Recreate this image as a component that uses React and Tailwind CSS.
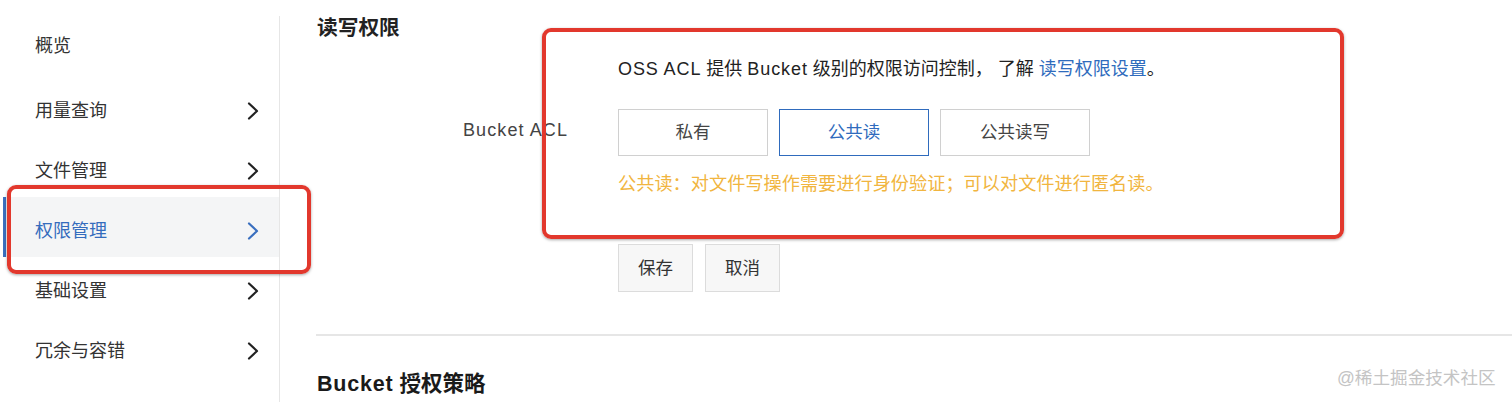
import React from "react";

const font = { fontFamily: '"Liberation Sans", "Noto Sans CJK SC", sans-serif' };

function Chevron({ color = "#222" }) {
  return (
    <svg width="12" height="18" viewBox="0 0 12 18" fill="none">
      <polyline points="2,1.5 10,9 2,16.5" stroke={color} strokeWidth="2.2" strokeLinecap="round" strokeLinejoin="round" />
    </svg>
  );
}

const items = [
  { label: "概览", chevron: false },
  { label: "用量查询", chevron: true },
  { label: "文件管理", chevron: true },
  { label: "权限管理", chevron: true, active: true },
  { label: "基础设置", chevron: true },
  { label: "冗余与容错", chevron: true },
];

export default function App() {
  return (
    <div
      className="relative w-[1512px] h-[402px] overflow-hidden bg-white flex text-[#333]"
      style={font}
    >
      {/* Sidebar */}
      <div className="w-[280px] shrink-0 mt-4 border-r border-[#e6e6e6] flex flex-col">
        {items.map((it, i) => (
          <div
            key={i}
            className={
              i === 0
                ? "h-[61px] flex items-center pl-[35px] text-[18px]"
                : it.active
                ? "h-[60px] flex items-center ml-[3px] pl-[29px] pr-[20px] pt-[8px] text-[18px] bg-[#f4f5f6] border-l-[3px] border-[#3a6fbf] text-[#356cbd]"
                : "h-[60px] flex items-center ml-[3px] pl-[32px] pr-[20px] pt-[8px] text-[18px]"
            }
          >
            <span className="flex-1">{it.label}</span>
            {it.chevron && <Chevron color={it.active ? "#3a6fbf" : "#222"} />}
          </div>
        ))}
      </div>

      {/* Main */}
      <div className="flex-1 flex flex-col">
        <div className="h-[56px] flex items-center pl-[37px] text-[20.7px] font-bold text-[#222]">
          读写权限
        </div>
        <div className="flex">
          <div className="w-[338px] pl-[183px] pt-[61px] text-[18px] leading-[26px] text-[#444] tracking-[1.1px] whitespace-nowrap">
            Bucket ACL
          </div>
          <div className="flex flex-col">
            <div className="h-[26px] leading-[26px] text-[18px] text-[#222] whitespace-nowrap">
              <span className="tracking-[0.9px]">OSS ACL</span> 提供 <span className="tracking-[0.9px]">Bucket</span> 级别的权限访问控制，&nbsp;了解 <span className="text-[#2f6bbd]">读写权限设置</span>。
            </div>
            <div className="mt-[27px] flex gap-[11px]">
              <div className="w-[150px] h-[47px] flex items-center justify-center border border-[#d0d0d0] text-[17.5px] text-[#444]">
                私有
              </div>
              <div className="w-[150px] h-[47px] flex items-center justify-center border border-[#2f6bbd] text-[17.5px] text-[#2f6bbd]">
                公共读
              </div>
              <div className="w-[150px] h-[47px] flex items-center justify-center border border-[#d0d0d0] text-[17.5px] text-[#444]">
                公共读写
              </div>
            </div>
            <div className="mt-[15px] h-[26px] leading-[26px] text-[18.2px] text-[#f1b540] whitespace-nowrap">
              公共读：对文件写操作需要进行身份验证；可以对文件进行匿名读。
            </div>
            <div className="mt-[47px] flex gap-[12px]">
              <div className="w-[75px] h-[48px] flex items-center justify-center border border-[#dcdcdc] bg-[#f7f7f7] text-[17.5px] text-[#333]">
                保存
              </div>
              <div className="w-[75px] h-[48px] flex items-center justify-center border border-[#dcdcdc] bg-[#f7f7f7] text-[17.5px] text-[#333]">
                取消
              </div>
            </div>
          </div>
        </div>
        <div className="mt-[42px] ml-[36px] h-[2px] bg-[#e6e6e6]" />
        <div className="mt-[33px] pl-[37px] h-[30px] leading-[30px] text-[21.5px] font-bold text-[#1a1a1a] whitespace-nowrap">
          <span className="tracking-[0.8px]">Bucket</span> 授权策略
        </div>
      </div>

      {/* Annotation boxes */}
      <div className="absolute left-[7px] top-[185px] w-[304px] h-[89px] border-[4px] border-[#e2382d] rounded-[9px] shadow-[0_1px_3px_rgba(0,0,0,0.35)]" />
      <div className="absolute left-[542px] top-[28px] w-[802px] h-[211px] border-[4px] border-[#e2382d] rounded-[9px] shadow-[0_1px_3px_rgba(0,0,0,0.35)]" />

      {/* Watermark */}
      <div className="absolute left-[1337px] top-[366px] text-[17.6px] leading-[24px] text-[#c4c4c4] whitespace-nowrap">
        @稀土掘金技术社区
      </div>
    </div>
  );
}
